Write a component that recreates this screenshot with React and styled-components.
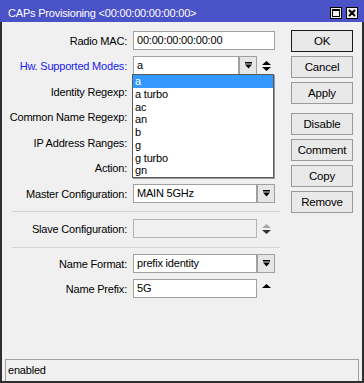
import React from "react";
import styled, { createGlobalStyle } from "styled-components";

const GlobalStyle = createGlobalStyle`
  html, body {
    margin: 0;
    padding: 0;
    background: #f0f0f0;
  }
  body {
    font-family: "Liberation Sans", Arial, sans-serif;
    font-size: 11px;
    letter-spacing: -0.2px;
    color: #000;
  }
`;

const modes = ["a", "a turbo", "ac", "an", "b", "g", "g turbo", "gn"];

function DropIcon() {
  return (
    <svg width="7" height="7" viewBox="0 0 7 7">
      <rect x="0" y="0" width="7" height="1.5" fill="#000" />
      <polygon points="0,2.5 7,2.5 3.5,6.5" fill="#000" />
    </svg>
  );
}

function SpinIcon({ up = "#000", down = "#000", onlyUp }) {
  return (
    <svg width="9" height="10" viewBox="0 0 9 10">
      <polygon points="0,4 9,4 4.5,0" fill={up} />
      {!onlyUp && <polygon points="0,6 9,6 4.5,10" fill={down} />}
    </svg>
  );
}

function App() {
  return (
    <>
      <GlobalStyle />
      <Window>
        <TitleBar>
          <TitleText>CAPs Provisioning &lt;00:00:00:00:00:00&gt;</TitleText>
          <TitleButtons>
            <TitleButton>
              <svg width="8" height="8" viewBox="0 0 8 8">
                <rect x="0.5" y="0.5" width="7" height="7" fill="none" stroke="#000" />
                <rect x="0" y="0" width="8" height="2" fill="#000" />
              </svg>
            </TitleButton>
            <TitleButton>
              <svg width="8" height="8" viewBox="0 0 8 8">
                <path d="M1 1 L7 7 M7 1 L1 7" stroke="#000" strokeWidth="2" />
              </svg>
            </TitleButton>
          </TitleButtons>
        </TitleBar>
        <Frame>
          <Body>
            <Form>
              <Row $top={0}>
                <Label>Radio MAC:</Label>
                <Field>
                  <Input>00:00:00:00:00:00</Input>
                </Field>
              </Row>
              <Row $top={6}>
                <Label $blue>Hw. Supported Modes:</Label>
                <Field>
                  <Input>a</Input>
                  <DropButton>
                    <DropIcon />
                  </DropButton>
                  <Spinner>
                    <SpinIcon />
                  </Spinner>
                  <DropList>
                    {modes.map((m, i) => (
                      <DropItem key={m} $active={i === 0}>
                        {m}
                      </DropItem>
                    ))}
                  </DropList>
                </Field>
              </Row>
              <Row $top={7}>
                <Label>Identity Regexp:</Label>
                <Field>
                  <Input />
                </Field>
              </Row>
              <Row $top={6}>
                <Label>Common Name Regexp:</Label>
                <Field>
                  <Input />
                </Field>
              </Row>
              <Row $top={7}>
                <Label>IP Address Ranges:</Label>
                <Field>
                  <Input />
                </Field>
              </Row>
              <Row $top={6}>
                <Label>Action:</Label>
                <Field>
                  <Input />
                </Field>
              </Row>
              <Row $top={7}>
                <Label>Master Configuration:</Label>
                <Field>
                  <Input>MAIN 5GHz</Input>
                  <DropButton>
                    <DropIcon />
                  </DropButton>
                </Field>
              </Row>
              <Separator $top={8} />
              <Row $top={7}>
                <Label>Slave Configuration:</Label>
                <Field>
                  <Input $disabled />
                  <Spinner>
                    <SpinIcon up="#a8a8a8" down="#333" />
                  </Spinner>
                </Field>
              </Row>
              <Separator $top={9} />
              <Row $top={6}>
                <Label>Name Format:</Label>
                <Field>
                  <Input>prefix identity</Input>
                  <DropButton>
                    <DropIcon />
                  </DropButton>
                </Field>
              </Row>
              <Row $top={6}>
                <Label>Name Prefix:</Label>
                <Field>
                  <Input>5G</Input>
                  <Spinner>
                    <SpinIcon onlyUp />
                  </Spinner>
                </Field>
              </Row>
            </Form>
            <Buttons>
              <ButtonGroup>
                <Button $default>OK</Button>
                <Button>Cancel</Button>
                <Button>Apply</Button>
              </ButtonGroup>
              <ButtonGroup>
                <Button>Disable</Button>
                <Button>Comment</Button>
                <Button>Copy</Button>
                <Button>Remove</Button>
              </ButtonGroup>
            </Buttons>
          </Body>
          <StatusBar>enabled</StatusBar>
        </Frame>
      </Window>
    </>
  );
}

const Window = styled.div`
  width: 364px;
  height: 383px;
  display: flex;
  flex-direction: column;
  box-sizing: border-box;
`;

const TitleBar = styled.div`
  height: 22px;
  flex: none;
  box-sizing: border-box;
  padding: 5px 6px 0 8px;
  display: flex;
  align-items: flex-start;
  justify-content: space-between;
  background: #4a52c8;
  color: #fff;
`;

const TitleText = styled.div`
  font-size: 11px;
  line-height: 16px;
`;

const TitleButtons = styled.div`
  display: flex;
  gap: 4px;
  margin-top: 2px;
`;

const TitleButton = styled.div`
  width: 12px;
  height: 12px;
  box-sizing: border-box;
  border: 1px solid #000;
  background: #f0f0f0;
  display: flex;
  align-items: center;
  justify-content: center;
`;

const Frame = styled.div`
  flex: 1;
  display: flex;
  flex-direction: column;
  border: 2px solid #2e2e2e;
  border-top: none;
  background: #f0f0f0;
`;

const Body = styled.div`
  flex: 1;
  display: flex;
  padding-top: 9px;
`;

const Form = styled.div`
  width: 283px;
  display: flex;
  flex-direction: column;
`;

const Row = styled.div`
  display: flex;
  align-items: center;
  height: 19px;
  margin-top: ${(p) => p.$top}px;
`;

const Label = styled.div`
  width: 125px;
  margin-right: 6px;
  text-align: right;
  white-space: nowrap;
  color: ${(p) => (p.$blue ? "#1a1aee" : "#000")};
`;

const Field = styled.div`
  position: relative;
  width: 142px;
  height: 19px;
  display: flex;
`;

const Input = styled.div`
  flex: 1;
  height: 19px;
  box-sizing: border-box;
  border: 1px solid ${(p) => (p.$disabled ? "#b4b4b4" : "#a0a0a0")};
  background: ${(p) => (p.$disabled ? "#f0f0f0" : "#fff")};
  padding: 0 3px;
  line-height: 17px;
  white-space: nowrap;
  overflow: hidden;
`;

const DropButton = styled.div`
  width: 18px;
  height: 19px;
  flex: none;
  box-sizing: border-box;
  border: 1px solid #a0a0a0;
  background: #e6e6e6;
  display: flex;
  align-items: center;
  justify-content: center;
`;

const Spinner = styled.div`
  width: 18px;
  height: 19px;
  flex: none;
  display: flex;
  align-items: center;
  justify-content: center;
  padding-left: 1px;
  box-sizing: border-box;
`;

const DropList = styled.div`
  position: absolute;
  top: 18px;
  left: -1px;
  width: 142px;
  box-sizing: border-box;
  border: 1px solid #5a5a5a;
  box-shadow: 1px 1px 0 #9a9a9a;
  background: #fff;
  z-index: 10;
`;

const DropItem = styled.div`
  height: 12.75px;
  line-height: 12.75px;
  padding-left: 2px;
  background: ${(p) => (p.$active ? "#3399ff" : "#fff")};
  color: ${(p) => (p.$active ? "#fff" : "#000")};
`;

const Separator = styled.div`
  margin: ${(p) => p.$top}px 5px 0 10px;
  border-top: 1px solid #d4d4d4;
`;

const Buttons = styled.div`
  width: 62px;
  margin: -1px 0 0 6px;
  display: flex;
  flex-direction: column;
  gap: 9px;
`;

const ButtonGroup = styled.div`
  display: flex;
  flex-direction: column;
  gap: 4px;
`;

const Button = styled.div`
  height: 22px;
  box-sizing: border-box;
  border: 1px solid ${(p) => (p.$default ? "#1a1a1a" : "#9a9a9a")};
  background: #e9e9e9;
  display: flex;
  align-items: center;
  justify-content: center;
  font-size: 11.5px;
`;

const StatusBar = styled.div`
  height: 22px;
  margin: 0 3px;
  box-sizing: border-box;
  border: 1px solid #a0a0a0;
  border-bottom: none;
  padding-left: 2px;
  line-height: 20px;
`;

export default App;
